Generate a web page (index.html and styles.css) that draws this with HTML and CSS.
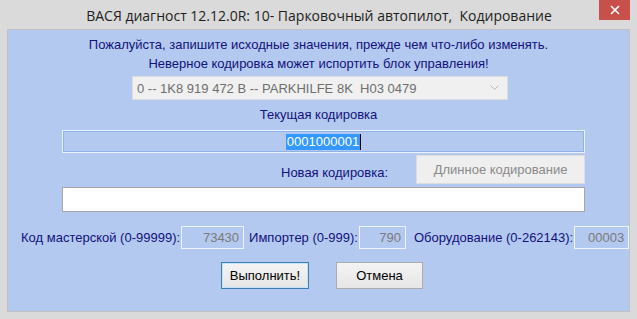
FILE: index.html
```html
<!DOCTYPE html>
<html lang="ru">
  <head>
    <meta charset="UTF-8" />
    <title>Кодирование</title>
    <link rel="stylesheet" href="styles.css">
  </head>
  <body>
    <div class="window">
      <div class="titlebar">
        <span class="title">ВАСЯ диагност 12.12.0R: 10- Парковочный автопилот,&nbsp; Кодирование</span>
        <div class="close">
          <svg width="10" height="10" viewBox="0 0 10 10"><path d="M1 1 L9 9 M9 1 L1 9" stroke="#fff" stroke-width="1.6"/></svg>
        </div>
      </div>
      <div class="client">
        <p class="note">Пожалуйста, запишите исходные значения, прежде чем что-либо изменять.</p>
        <p class="note">Неверное кодировка может испортить блок управления!</p>
        <div class="select">
          <span>0 -- 1K8 919 472 B -- PARKHILFE 8K&nbsp; H03 0479</span>
          <svg width="9" height="6" viewBox="0 0 9 6"><path d="M0.5 0.5 L4.5 4.5 L8.5 0.5" fill="none" stroke="#b8b8b8" stroke-width="1"/></svg>
        </div>
        <p class="label">Текущая кодировка</p>
        <div class="field current"><span class="sel">0001000001</span><span class="caret"></span></div>
        <div class="newrow">
          <span class="newlabel">Новая кодировка:</span>
          <div class="longbtn">Длинное кодирование</div>
        </div>
        <div class="field newcode"></div>
        <div class="coderow">
          <span>Код мастерской (0-99999):</span>
          <div class="num w63">73430</div>
          <span>Импортер (0-999):</span>
          <div class="num w47">790</div>
          <span>Оборудование (0-262143):</span>
          <div class="num w55">00003</div>
        </div>
        <div class="buttons">
          <div class="btn default">Выполнить!</div>
          <div class="btn">Отмена</div>
        </div>
      </div>
    </div>
  </body>
</html>
```
FILE: styles.css
```css
html, body {
  margin: 0;
  padding: 0;
}

body {
  width: 637px;
  height: 319px;
  overflow: hidden;
  background: #dadada;
  font-family: "Liberation Sans", Arial, sans-serif;
  font-size: 13px;
}

.window {
  height: 319px;
  padding: 0 7px 7px 7px;
  box-sizing: border-box;
  display: flex;
  flex-direction: column;
}

.titlebar {
  height: 29px;
  position: relative;
  display: flex;
  justify-content: center;
  align-items: center;
}

.title {
  font-family: "Open Sans", "Noto Sans", sans-serif;
  font-size: 14px;
  color: #1e1e1e;
  margin-left: 1px;
  margin-top: 1px;
}

.close {
  position: absolute;
  top: 0;
  right: 0;
  width: 31px;
  height: 20px;
  background: #c7504b;
  display: flex;
  justify-content: center;
  align-items: center;
}

.client {
  flex: 1;
  background: #b4c9ef;
  border: 1px solid #c2c2c2;
  display: flex;
  flex-direction: column;
  align-items: flex-start;
  padding-top: 5px;
}

.note {
  margin: 0;
  align-self: center;
  line-height: 19px;
  color: #12127a;
  text-align: center;
}

.select {
  margin-top: 3px;
  margin-left: 124px;
  width: 376px;
  height: 24px;
  box-sizing: border-box;
  background: #f0f0f0;
  border: 1px solid #dddddd;
  color: #6e6e6e;
  display: flex;
  align-items: center;
  justify-content: space-between;
  padding: 0 8px 0 4px;
}

.label {
  margin: 5px 0 0 0;
  align-self: center;
  line-height: 20px;
  color: #12127a;
}

.field {
  width: 523px;
  box-sizing: border-box;
  margin-left: 54px;
}

.current {
  margin-top: 5px;
  height: 23px;
  border: 1px solid #eaf1ff;
  box-shadow: inset 0 0 0 1px #8fb3e8;
  display: flex;
  justify-content: center;
  align-items: center;
}

.sel {
  background: #3399ff;
  color: #fff;
  line-height: 16px;
  padding: 0 1px;
}

.caret {
  width: 1px;
  height: 16px;
  background: #000;
}

.newrow {
  margin-top: 2px;
  display: flex;
  align-items: center;
  height: 29px;
}

.newlabel {
  margin-left: 273px;
  margin-top: 6px;
  color: #12127a;
}

.longbtn {
  margin-left: 28px;
  width: 169px;
  height: 29px;
  box-sizing: border-box;
  background: #efefef;
  border: 1px solid #dcdcdc;
  color: #8a8a8a;
  display: flex;
  justify-content: center;
  align-items: center;
}

.newcode {
  margin-top: 3px;
  height: 25px;
  background: #fff;
  border: 1px solid #a6a6a6;
}

.coderow {
  margin-top: 14px;
  display: flex;
  align-items: center;
  padding-left: 13px;
  color: #12127a;
  white-space: nowrap;
}

.coderow span {
  flex-shrink: 0;
}

.num {
  flex-shrink: 0;
  height: 23px;
  box-sizing: border-box;
  border: 1px solid #eef3ff;
  color: #7a7a7a;
  display: flex;
  justify-content: flex-end;
  align-items: center;
  padding-right: 4px;
  margin: 0 5px 0 1px;
}

.w63 { width: 63px; }
.w47 { width: 47px; margin-right: 8px; }
.w55 { width: 55px; margin-right: 0; }

.buttons {
  margin-top: 13px;
  margin-left: 213px;
  display: flex;
  gap: 27px;
}

.btn {
  width: 87px;
  height: 27px;
  box-sizing: border-box;
  background: linear-gradient(#f3f3f3, #e6e6e6);
  border: 1px solid #acacac;
  color: #000;
  display: flex;
  justify-content: center;
  align-items: center;
}

.btn.default {
  width: 88px;
  border-color: #3c7fb1;
  box-shadow: inset 0 0 0 1px #c4e4fa;
}
```
